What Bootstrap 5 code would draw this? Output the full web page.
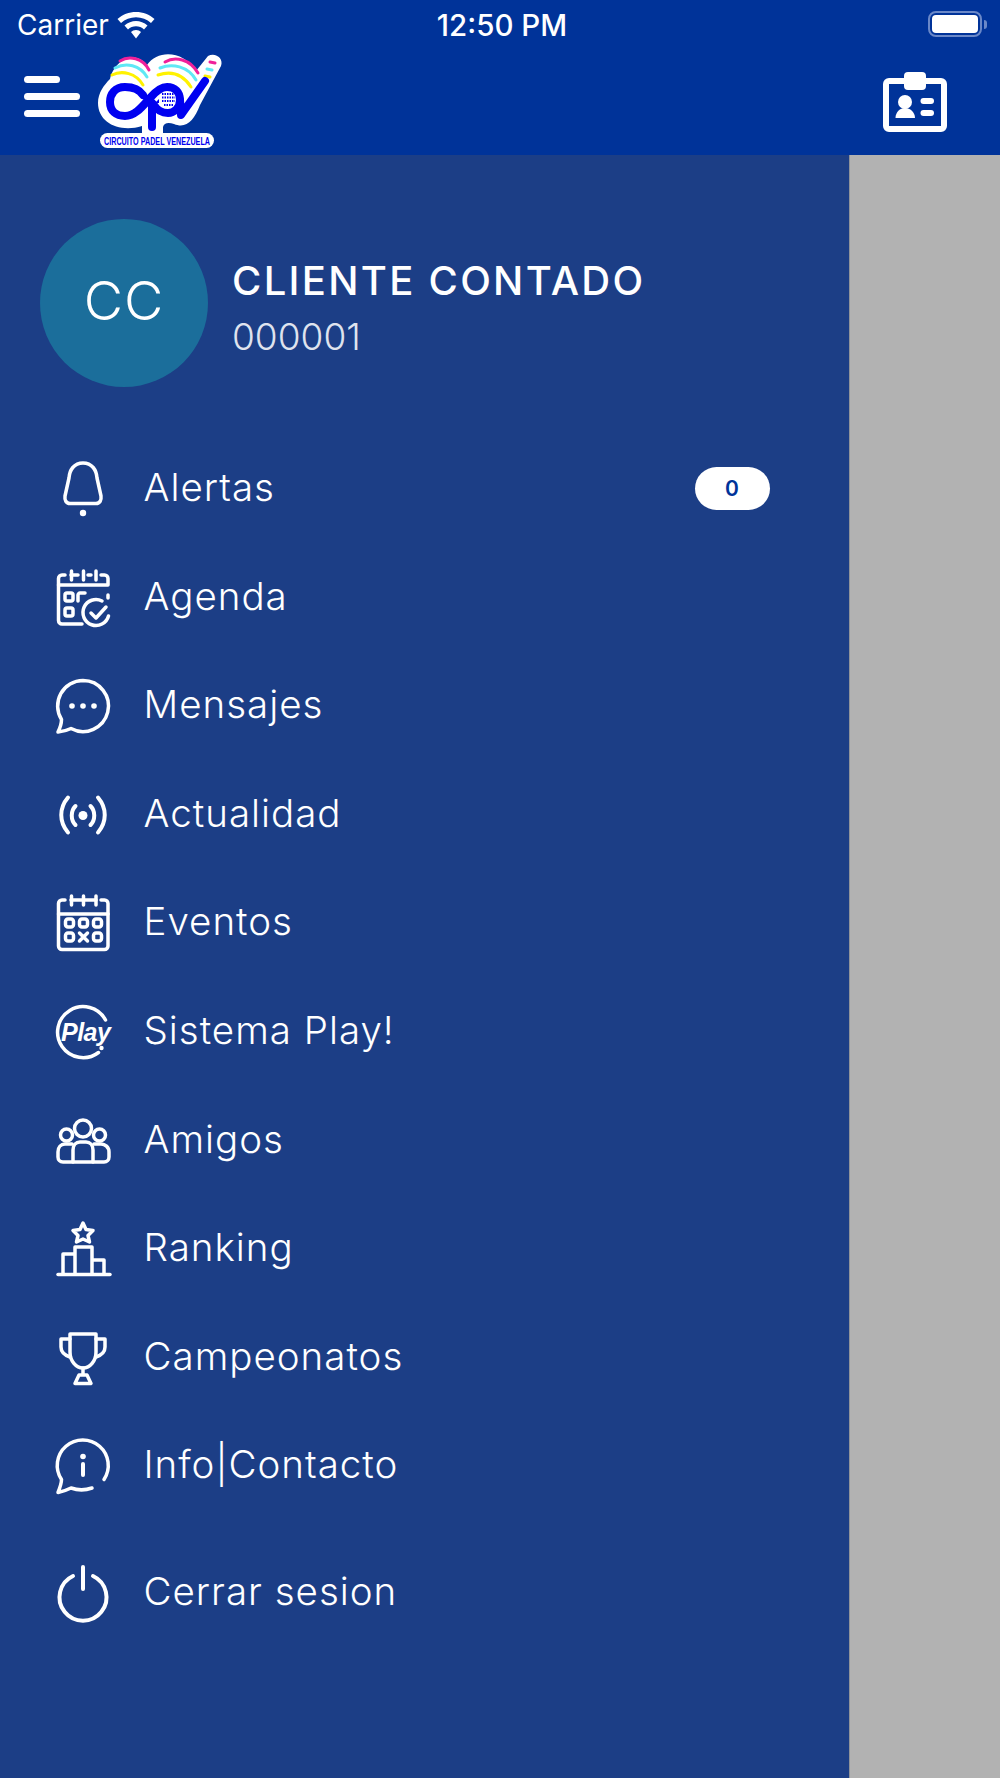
<!DOCTYPE html>
<html lang="es">
  <head>
    <meta charset="UTF-8" />
    <meta name="viewport" content="width=device-width, initial-scale=1.0" />
    <title>Circuito Padel Venezuela</title>
    <link href="https://cdn.jsdelivr.net/npm/bootstrap@5.3.0/dist/css/bootstrap.min.css" rel="stylesheet" />
    <style>
      body {
        background: #b2b2b2;
        height: 1778px;
        overflow: hidden;
        font-family: Inter, "Liberation Sans", sans-serif;
      }
      .top-area {
        background: #003399;
        color: #fff;
        height: 155px;
      }
      .status-line {
        height: 45px;
        padding: 5px 13px 0 17px;
      }
      .status-side {
        flex: 1 1 0;
      }
      .carrier-name {
        font-size: 28px;
      }
      .clock-text {
        font-size: 29.500px;
        font-weight: 500;
      }
      .battery-box {
        width: 54px;
        height: 26px;
        border: 2px solid #6a88c8;
        border-radius: 8px;
        padding: 2px;
        margin-top: -2px;
      }
      .battery-fill {
        background: #fff;
        border-radius: 4px;
      }
      .battery-cap {
        width: 3px;
        height: 9px;
        margin-left: 2px;
        margin-top: -2px;
        background: #6a88c8;
        border-radius: 0 3px 3px 0;
      }
      .tool-line {
        height: 110px;
        padding-right: 53px;
      }
      .burger-btn {
        width: 56px;
        margin: 0 10px 7px 24px;
        gap: 10px;
      }
      .burger-btn span {
        height: 7px;
        background: #fff;
        border-radius: 4px;
      }
      .burger-btn span:first-child {
        width: 36px;
      }
      .id-mark {
        margin-top: 3px;
      }
      .drawer-panel {
        width: 850px;
        height: 1623px;
        background: #1c3e86;
        color: #fff;
        border-right: 1px solid #8f9299;
      }
      .profile-block {
        padding: 64px 0 0 40px;
        gap: 24px;
      }
      .avatar-round {
        width: 168px;
        height: 168px;
        padding-bottom: 6px;
        background: #1b6e9b;
        font-size: 54px;
        font-weight: 300;
        letter-spacing: 1px;
      }
      .client-text {
        padding-top: 12px;
      }
      .client-name {
        font-size: 40px;
        font-weight: 500;
        line-height: 44px;
        letter-spacing: 2.300px;
        margin-bottom: 12px;
      }
      .client-code {
        font-size: 37px;
        font-weight: 300;
        line-height: 44px;
        color: #dfe3ee;
      }
      .menu-list {
        margin-top: 45.700px;
      }
      .menu-row {
        height: 108.600px;
        padding: 0 79px 0 55px;
        gap: 32.500px;
        color: #fff;
        font-size: 38.500px;
        font-weight: 300;
        letter-spacing: 1px;
      }
      .menu-row > span:not(.count-pill) {
        padding-top: 2px;
      }
      .menu-row svg {
        flex: none;
        overflow: visible;
        fill: none;
        stroke: #fff;
        stroke-width: 3.500;
        stroke-linecap: round;
        stroke-linejoin: round;
      }
      .menu-row .solid-mark {
        fill: #fff;
        stroke: none;
      }
      .menu-row.last-row {
        margin-top: 18.400px;
      }
      .count-pill {
        width: 75px;
        height: 43px;
        margin-top: 3px;
        background: #fff;
        color: #003399;
        font-size: 21px;
        font-weight: 600;
      }
      .play-word {
        font-family: "Liberation Sans", sans-serif;
        font-size: 25px;
        font-weight: 700;
        font-style: italic;
        letter-spacing: -0.500px;
      }
      .logo-word {
        font-family: "Liberation Sans", sans-serif;
        font-size: 7.200px;
        font-weight: 700;
      }
    </style>
  </head>
  <body>
    <!-- Status bar + toolbar -->
    <header class="top-area">
      <div class="status-line d-flex align-items-center">
        <div class="status-side d-flex align-items-center gap-2">
          <span class="carrier-name">Carrier</span>
          <svg width="38" height="27" viewBox="0 0 38 27" fill="#fff">
            <path d="M19 0C12 0 5.500 2.500 0.500 7L4 11C8 7.300 13.300 5.200 19 5.200S30 7.300 34 11L37.500 7C32.500 2.500 26 0 19 0z" />
            <path d="M19 9C15 9 10.800 10.500 7.500 13.500L11 17.400C13.200 15.400 16 14.300 19 14.300S24.800 15.400 27 17.400L30.500 13.500C27.200 10.500 23 9 19 9z" />
            <path d="M19 18C17 18 15.300 18.700 14 20L19 26.500L24 20C22.700 18.700 21 18 19 18z" />
          </svg>
        </div>
        <span class="clock-text">12:50 PM</span>
        <div class="status-side d-flex justify-content-end align-items-center">
          <div class="battery-box d-flex"><div class="battery-fill flex-fill"></div></div>
          <div class="battery-cap"></div>
        </div>
      </div>
      <div class="tool-line d-flex align-items-center">
        <div class="burger-btn d-flex flex-column">
          <span></span><span></span><span></span>
        </div>
        <!-- logo, coordinates taken from the crop -->
        <svg width="140" height="110" viewBox="0 0 140 110" fill="none" stroke-linecap="round" stroke-linejoin="round">
          <path d="M20 34C24 16 44 4 57 20C68 4 94 6 106 26L118 11C125 7 134 13 131 21L110 60C104 76 96 84 84 79C78 77 74 78 73 82V88H52V81C30 88 8 78 8 58C8 48 14 40 20 34z" fill="#fff" />
          <g stroke-width="3">
            <path d="M30 16C39 10 53 13 59 25" stroke="#f0209a" />
            <path d="M25 23C36 17 50 20 57 32" stroke="#5fe8f5" />
            <path d="M22 30C32 25 46 28 53 40" stroke="#fff200" />
            <path d="M75 17C85 11 100 14 108 28" stroke="#f0209a" />
            <path d="M70 23C82 18 98 21 106 35" stroke="#5fe8f5" />
            <path d="M68 30C80 26 92 28 101 42" stroke="#fff200" />
            <path d="M120 17L125 18" stroke="#f0209a" />
            <path d="M117 24L122 25" stroke="#5fe8f5" />
            <path d="M115 31L120 32" stroke="#fff200" />
          </g>
          <g stroke="#0000f0" stroke-width="8">
            <path d="M53 50C49 44 42 42 35 42C25 42 20 49 20 57C20 66 26 71 35 71C45 71 52 62 60 53C66 46 71 42 77 42C85 42 90 47 90 55C90 63 84 68 78 68C72 68 67 65 64 60" />
            <path d="M90 55L91 70L115 36" />
            <path d="M62 58V82" />
          </g>
          <path d="M65 58L69 54V58z" fill="#0000f0" />
          <path d="M72 49H84M72 52.500H85M72 56H85M74 60H83" stroke="#0000f0" stroke-width="1.800" stroke-dasharray="1.500 1" stroke-linecap="butt" />
          <rect x="10" y="88" width="114" height="15" rx="7.500" fill="#fff" />
          <text class="logo-word" transform="translate(14 100) scale(1 1.500)" fill="#0000f0" textLength="106">CIRCUITO PADEL VENEZUELA</text>
        </svg>
        <svg class="id-mark ms-auto" width="64" height="60" viewBox="0 0 64 60" fill="#fff">
          <rect x="3" y="9" width="58" height="48" rx="3" fill="none" stroke="#fff" stroke-width="6" />
          <rect x="21" y="0" width="22" height="18" rx="4" />
          <circle cx="22" cy="30" r="7" />
          <path d="M12.500 46C12.500 40 17 36 22 36S32 40 32 46z" />
          <rect x="37.500" y="26" width="13.500" height="6" rx="3" />
          <rect x="37.500" y="38" width="13.500" height="6" rx="3" />
        </svg>
      </div>
    </header>

    <!-- Side drawer -->
    <aside class="drawer-panel">
      <div class="profile-block d-flex align-items-center">
        <div class="avatar-round rounded-circle d-flex align-items-center justify-content-center">CC</div>
        <div class="client-text">
          <div class="client-name">CLIENTE CONTADO</div>
          <div class="client-code">000001</div>
        </div>
      </div>

      <nav class="menu-list d-flex flex-column">
        <a class="menu-row d-flex align-items-center text-decoration-none" href="#">
          <svg width="56" height="56" viewBox="0 0 56 56">
            <path d="M28 4C19 4 14.500 11 14 19L10 37C9.500 41 11 44.500 15 44.500H41C45 44.500 46.500 41 46 37L42 19C41.500 11 37 4 28 4z" />
            <circle class="solid-mark" cx="28" cy="54" r="3.200" />
          </svg>
          <span class="flex-grow-1">Alertas</span>
          <span class="count-pill rounded-pill d-flex align-items-center justify-content-center">0</span>
        </a>
        <a class="menu-row d-flex align-items-center text-decoration-none" href="#">
          <svg width="56" height="56" viewBox="0 0 56 56">
            <path d="M10 7H7C5 7 3.500 8.500 3.500 10.500V52.500C3.500 54.500 5 56 7 56H27" />
            <path d="M16 7H23M33 7H36M46 7H49.500C51.500 7 53 8.500 53 10.500V17H3.500" />
            <path d="M16.500 3V12M28.500 3V12M41 3V12M53 27V30" />
            <rect x="10" y="25" width="8" height="8" rx="2" />
            <rect x="10" y="40" width="8" height="8" rx="2" />
            <path d="M23 33V27C23 26 24 25 25 25H30" />
            <path d="M53.500 48A13 13 0 1 1 47 33" />
            <path d="M36 45L41 50L51 39" />
          </svg>
          <span>Agenda</span>
        </a>
        <a class="menu-row d-flex align-items-center text-decoration-none" href="#">
          <svg width="56" height="56" viewBox="0 0 56 56">
            <path d="M28 4.500A25.500 25.500 0 1 1 16 52.500C12 54.500 8 55.500 3 56C5 52 6.500 48 6.500 43.500A25.500 25.500 0 0 1 28 4.500z" />
            <circle class="solid-mark" cx="17" cy="30" r="2.800" />
            <circle class="solid-mark" cx="28" cy="30" r="2.800" />
            <circle class="solid-mark" cx="39" cy="30" r="2.800" />
          </svg>
          <span>Mensajes</span>
        </a>
        <a class="menu-row d-flex align-items-center text-decoration-none" href="#">
          <svg width="56" height="56" viewBox="0 0 56 56" style="stroke-width: 4">
            <path d="M13 12.500C4 23 4 37 13 47.500M43 12.500C52 23 52 37 43 47.500" />
            <path d="M20.500 21C15.500 26 15.500 35 20.500 40M35.500 21C40.500 26 40.500 35 35.500 40" />
            <circle class="solid-mark" cx="28" cy="30.500" r="4.500" />
          </svg>
          <span>Actualidad</span>
        </a>
        <a class="menu-row d-flex align-items-center text-decoration-none" href="#">
          <svg width="56" height="56" viewBox="0 0 56 56">
            <path d="M10 7H7C5 7 3.500 8.500 3.500 10.500V53C3.500 55 5 56.500 7 56.500H49.500C51.500 56.500 53 55 53 53V10.500C53 8.500 51.500 7 49.500 7H46" />
            <path d="M16 7H41M3.500 21H53" />
            <path d="M16.500 3V12M28.500 3V12M41 3V12" />
            <rect x="10.500" y="26" width="8" height="8" rx="2.500" />
            <rect x="24.500" y="26" width="8" height="8" rx="2.500" />
            <rect x="38.500" y="26" width="8" height="8" rx="2.500" />
            <rect x="10.500" y="40" width="8" height="8" rx="2.500" />
            <path d="M24.500 40L32.500 48M32.500 40L24.500 48" />
            <rect x="38.500" y="40" width="8" height="8" rx="2.500" />
          </svg>
          <span>Eventos</span>
        </a>
        <a class="menu-row d-flex align-items-center text-decoration-none" href="#">
          <svg width="56" height="56" viewBox="0 0 56 56">
            <path d="M50.500 18A25.500 25.500 0 1 0 43.500 50.500" />
            <text class="play-word solid-mark" x="6" y="39">Play</text>
            <circle class="solid-mark" cx="46.500" cy="46" r="2.200" />
          </svg>
          <span>Sistema Play!</span>
        </a>
        <a class="menu-row d-flex align-items-center text-decoration-none" href="#">
          <svg width="56" height="56" viewBox="0 0 56 56">
            <circle cx="28" cy="17.500" r="8.500" />
            <circle cx="11.500" cy="24" r="6" />
            <circle cx="44.500" cy="24" r="6" />
            <path d="M7 51H49C52 51 54 49 54 46V41C54 36 50 33 46 33H39M17 33H10C6 33 3 36 3 41V46C3 49 5 51 8 51" />
            <path d="M18 51V39C18 34 21 31 25 31H31C35 31 38 34 38 39V51" />
          </svg>
          <span>Amigos</span>
        </a>
        <a class="menu-row d-flex align-items-center text-decoration-none" href="#">
          <svg width="56" height="56" viewBox="0 0 56 56">
            <path d="M28 4L31 10.500L38 11.500L33 16.500L34.500 23L28 20L21.500 23L23 16.500L18 11.500L25 10.500z" />
            <path d="M3 55.500H55" />
            <path d="M8 55V35H20M20 55V28H37V55M37 41H49V55" />
          </svg>
          <span>Ranking</span>
        </a>
        <a class="menu-row d-flex align-items-center text-decoration-none" href="#">
          <svg width="56" height="56" viewBox="0 0 56 56">
            <path d="M15 6H41V24C41 33 35 40 28 40C21 40 15 33 15 24z" />
            <path d="M15 11H6V19C6 24 9 27 15 29M41 11H50V19C50 24 47 27 41 29" />
            <path d="M28 40V47M24 47H32L36 55.500H20z" />
          </svg>
          <span>Campeonatos</span>
        </a>
        <a class="menu-row d-flex align-items-center text-decoration-none" href="#">
          <svg width="56" height="56" viewBox="0 0 56 56">
            <path d="M49 44A25.500 25.500 0 1 0 6.500 44C6.500 48 5 52 3 57C8 56 12 54.500 16 52.500C23 55 30 55 37 52.500" transform="translate(0 -0.500)" />
            <circle class="solid-mark" cx="28" cy="20.500" r="2.800" />
            <path d="M28 28V39" style="stroke-width: 4" />
          </svg>
          <span>Info|Contacto</span>
        </a>
        <a class="menu-row last-row d-flex align-items-center text-decoration-none" href="#">
          <svg width="56" height="56" viewBox="0 0 56 56" style="stroke-width: 4">
            <path d="M18 13A23.500 23.500 0 1 0 38 13" />
            <path d="M28 4V26" />
          </svg>
          <span>Cerrar sesion</span>
        </a>
      </nav>
    </aside>

    <script src="https://cdn.jsdelivr.net/npm/bootstrap@5.3.0/dist/js/bootstrap.bundle.min.js"></script>
  </body>
</html>
